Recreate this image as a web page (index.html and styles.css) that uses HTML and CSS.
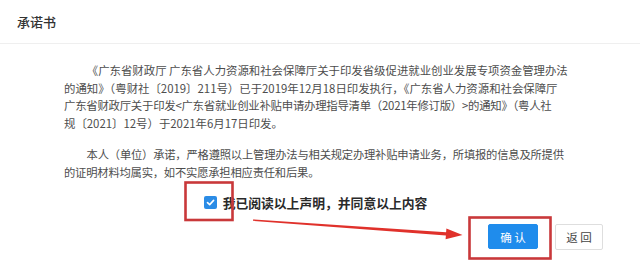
FILE: index.html
```html
<!DOCTYPE html>
<html lang="zh-CN">
<head>
<meta charset="utf-8">
<title>承诺书</title>
<link rel="stylesheet" href="styles.css">
</head>
<body>
<div class="page">
  <div class="header"><span class="title">承诺书</span></div>
  <div class="content">
    <p class="para">《广东省财政厅 广东省人力资源和社会保障厅关于印发省级促进就业创业发展专项资金管理办法<br>的通知》（粤财社〔2019〕211号）已于2019年12月18日印发执行，《广东省人力资源和社会保障厅<br><span class="tight">广东省财政厅关于印发&lt;广东省就业创业补贴申请办理指导清单（2021年修订版）&gt;的通知》（粤人社</span><br>规〔2021〕12号）于2021年6月17日印发。</p>
    <p class="para para2">本人（单位）承诺，严格遵照以上管理办法与相关规定办理补贴申请业务，所填报的信息及所提供<br>的证明材料均属实，如不实愿承担相应责任和后果。</p>
    <label class="agree">
      <span class="check"><svg width="9" height="9" viewBox="0 0 9 9"><path d="M1.5 4.6 L3.7 6.6 L7.6 2.4" fill="none" stroke="#fff" stroke-width="1.6" stroke-linecap="round" stroke-linejoin="round"/></svg></span>
      <span class="agree-text">我已阅读以上声明，并同意以上内容</span>
    </label>
  </div>
  <div class="actions">
    <button class="btn btn-primary">确 认</button>
    <button class="btn btn-default">返 回</button>
  </div>
  <svg class="marks" width="640" height="280" viewBox="0 0 640 280">
    <rect x="185.5" y="182.5" width="47" height="37.5" fill="none" stroke="#c9383a" stroke-width="2.6"/>
    <rect x="469.5" y="217.5" width="81" height="41" fill="none" stroke="#c9383a" stroke-width="2.6"/>
    <polygon points="253,219.4 446.1,232.2 446.4,228.6 462.5,235 445.6,239.2 445.9,235.6 253,220.8" fill="#e0312b"/>
  </svg>
</div>
</body>
</html>
```

FILE: styles.css
```css
html, body {
  margin: 0;
  padding: 0;
  background: #ffffff;
}
body {
  font-family: "Noto Sans CJK SC", "Noto Sans", sans-serif;
  color: #333;
}
.page {
  position: relative;
  width: 640px;
  height: 280px;
  overflow: hidden;
}
.header {
  height: 44px;
  border-bottom: 1px solid #efefef;
  display: flex;
  align-items: center;
  padding-left: 17px;
  box-sizing: border-box;
}
.title {
  font-size: 13px;
  font-weight: 500;
  color: #333;
}
.content {
  padding: 18px 0 0 64px;
  width: 511px;
}
.para {
  margin: 0;
  font-size: 11.4px;
  line-height: 17.7px;
  color: #4d4d4d;
  text-indent: 2em;
  white-space: nowrap;
}
.tight {
  letter-spacing: -0.25px;
}
.para2 {
  margin-top: 13.3px;
  font-size: 11.3px;
  letter-spacing: -0.2px;
}
.agree {
  margin-top: 10.5px;
  height: 20px;
  display: flex;
  align-items: center;
  justify-content: center;
  gap: 6px;
  padding-right: 8px;
}
.check {
  width: 13px;
  height: 13px;
  border-radius: 2px;
  background: #2b8ce6;
  display: flex;
  align-items: center;
  justify-content: center;
}
.agree-text {
  font-size: 12.8px;
  font-weight: 700;
  color: #2a2a2a;
}
.actions {
  margin-top: 12px;
  display: flex;
  justify-content: flex-end;
  gap: 17px;
  padding-right: 37px;
}
.btn {
  font-family: "Noto Sans CJK SC", sans-serif;
  font-size: 11.5px;
  height: 25px;
  padding: 0;
  border-radius: 2px;
  cursor: pointer;
}
.btn-primary {
  width: 50px;
  background: #1f8cec;
  color: #fff;
  border: 1px solid #1f8cec;
}
.btn-default {
  width: 48px;
  height: 26px;
  background: #fff;
  color: #444;
  border: 1px solid #dedede;
}
.marks {
  position: absolute;
  left: 0;
  top: 0;
  pointer-events: none;
}
```
